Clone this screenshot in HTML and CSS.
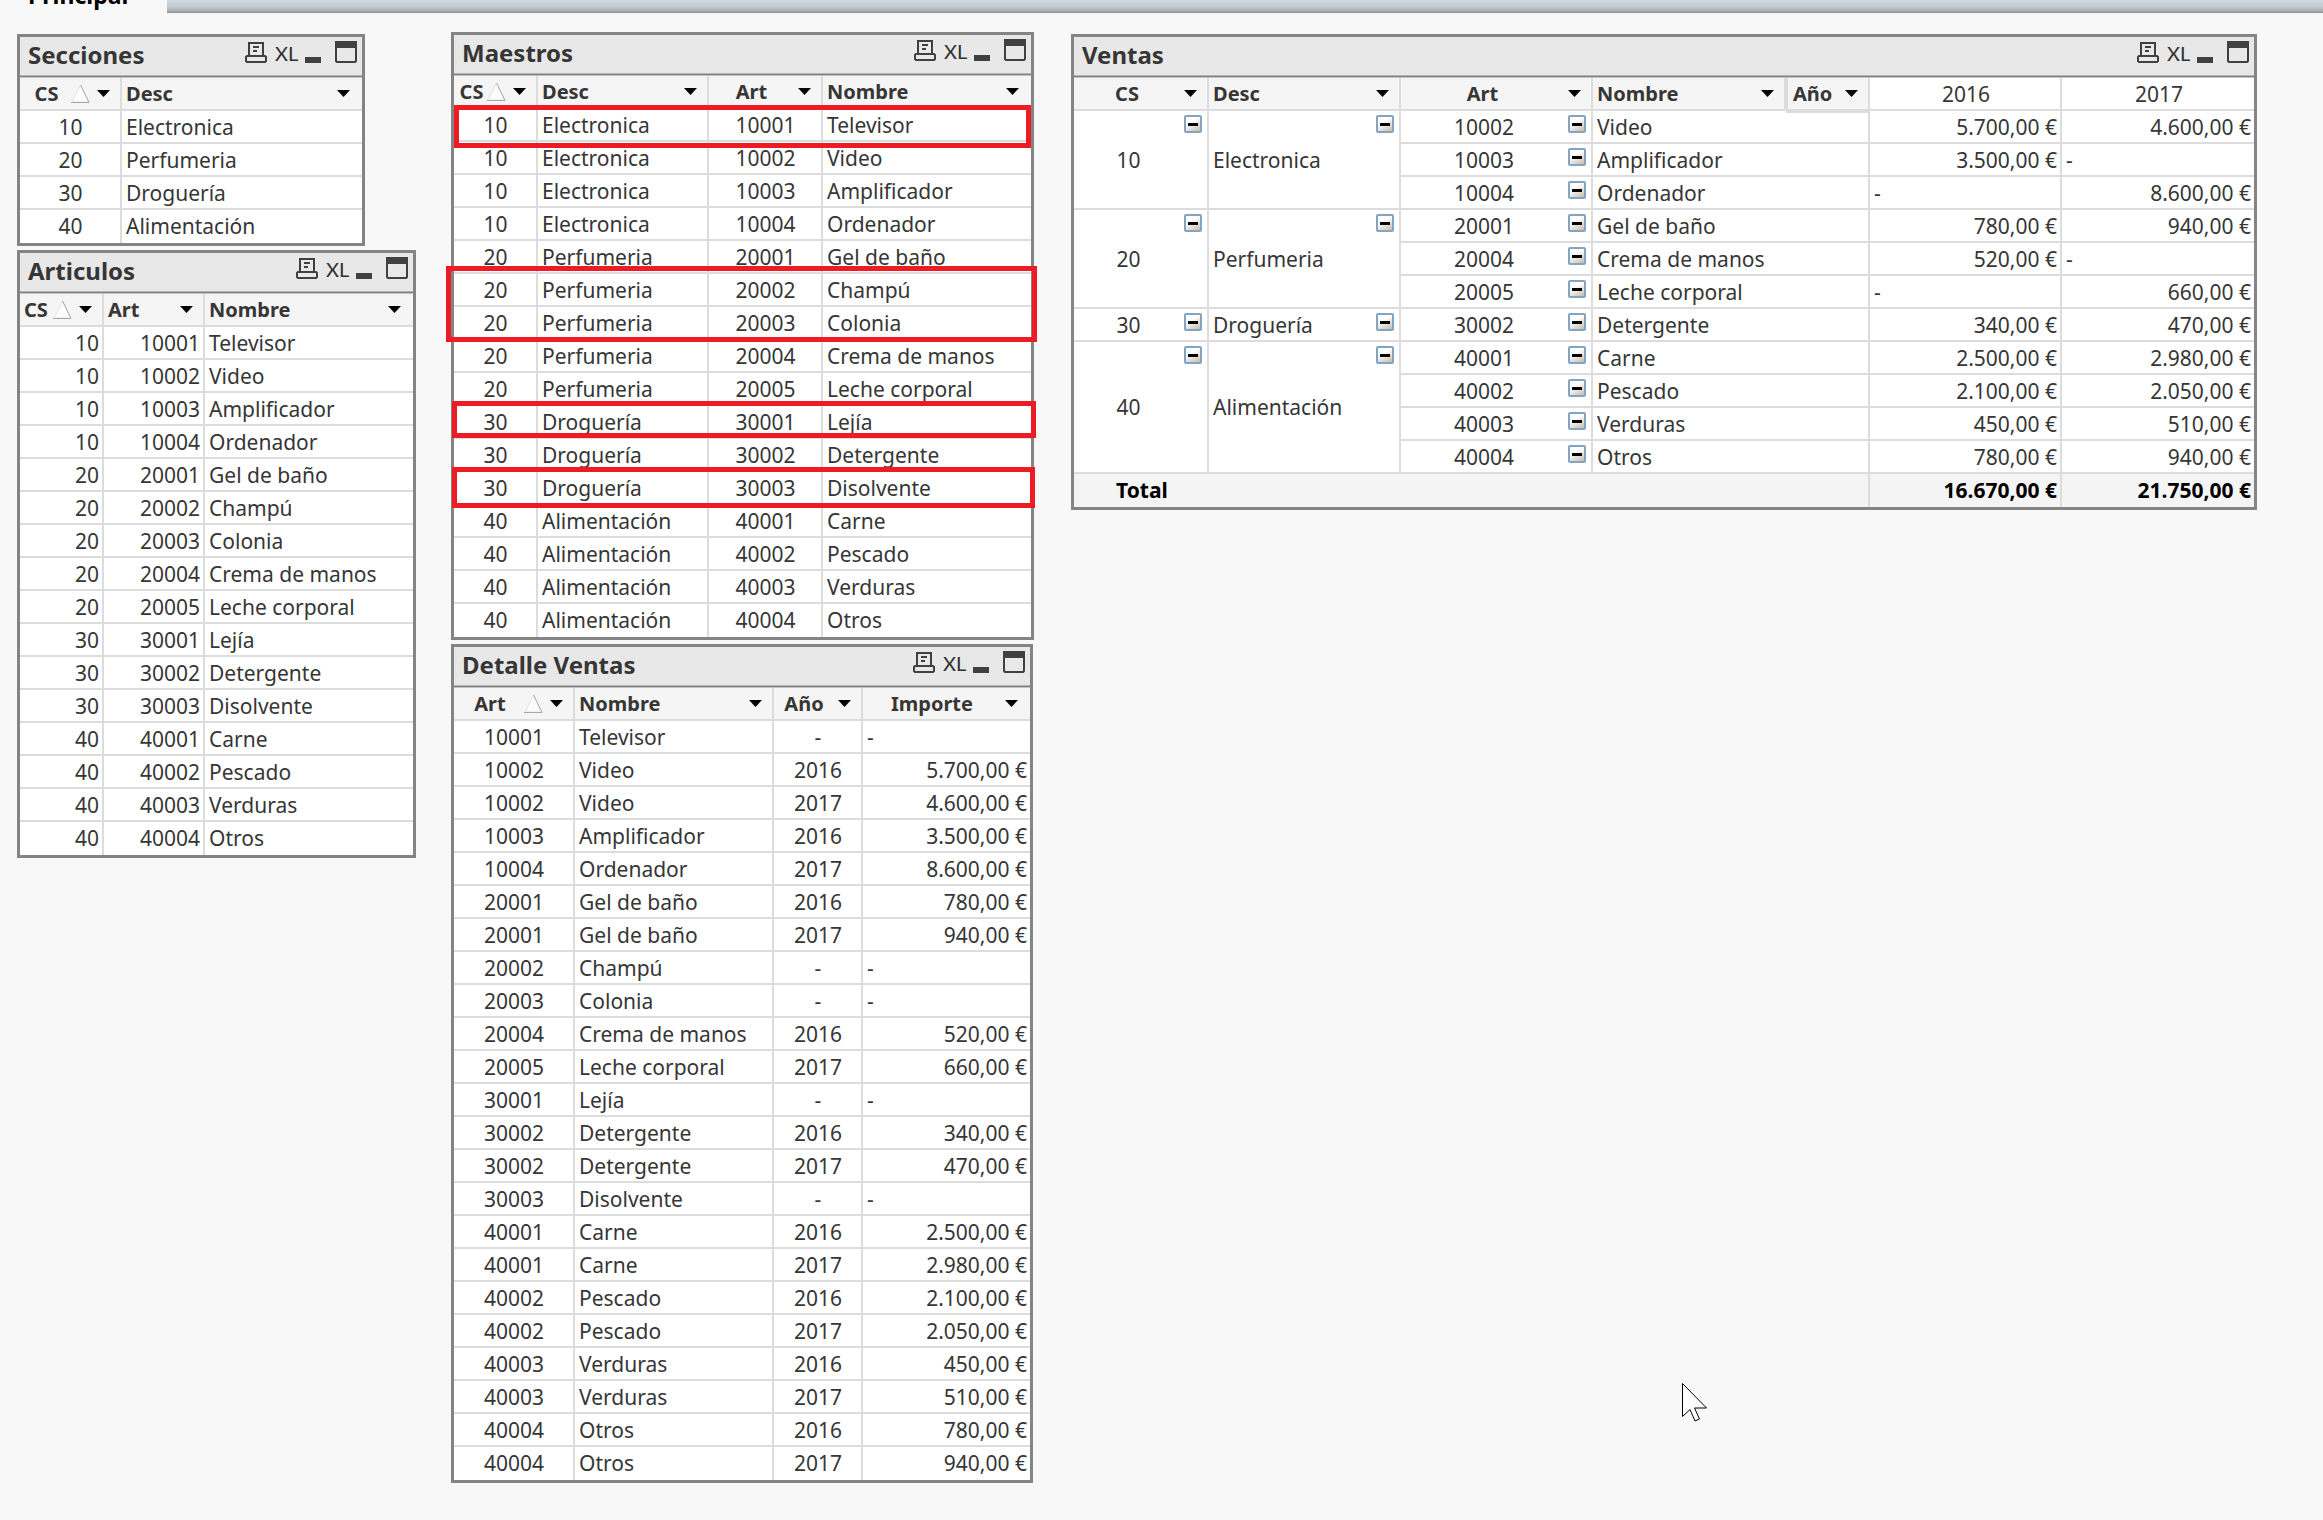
FILE: index.html
```html
<!DOCTYPE html>
<html lang="es">
<head>
<meta charset="utf-8">
<title>Principal</title>
<link rel="stylesheet" href="styles.css">
</head>
<body>
<svg class="sprite" aria-hidden="true">
  <symbol id="print" viewBox="0 0 22 22"><path d="M4 14V2h14v12M2 15h18l1 1v4l-1 1H2l-1-1v-4z" fill="none" stroke="#404040" stroke-width="2"/><path d="M8 6h6M8 10h4" stroke="#404040" stroke-width="2"/></symbol>
  <symbol id="min" viewBox="0 0 16 22"><path d="M0 16h16v6H0z" fill="#404040"/></symbol>
  <symbol id="max" viewBox="0 0 22 22"><path d="M1 1h20v19l-1 1H2l-1-1z" fill="none" stroke="#404040" stroke-width="2"/><path d="M0 0h22v7H0z" fill="#404040"/></symbol>
  <symbol id="down" viewBox="0 0 13 7"><path d="M0 0h13L6.500 7z" fill="#000"/></symbol>
  <symbol id="asc" viewBox="0 0 19 19"><path d="M1 18L9.500 1L18 18z" fill="#fcfcfc" stroke="#e4e4e4"/><path d="M9.500 1L18 18.500H0" fill="none" stroke="#a8a8a8"/></symbol>
</svg>
<header class="tabs"><a class="tab" href="#principal">Principal</a></header>
<main class="sheet" id="principal">
  <div class="column">
    <section class="panel secciones">
      <div class="caption"><h2>Secciones</h2><button aria-label="Imprimir"><svg width="22" height="22"><use href="#print"/></svg></button><button class="xl">XL</button><button aria-label="Minimizar"><svg width="16" height="22"><use href="#min"/></svg></button><button class="max" aria-label="Maximizar"><svg width="22" height="22"><use href="#max"/></svg></button></div>
      <table>
        <colgroup><col class="w102"><col></colgroup>
        <thead><tr>
          <th class="c"><div><span>CS</span><svg class="asc"><use href="#asc"/></svg><button aria-label="Filtrar CS"><svg><use href="#down"/></svg></button></div></th>
          <th><div><span>Desc</span><button aria-label="Filtrar Desc"><svg><use href="#down"/></svg></button></div></th>
        </tr></thead>
        <tbody>
          <tr><td>10</td><td>Electronica</td></tr>
          <tr><td>20</td><td>Perfumeria</td></tr>
          <tr><td>30</td><td>Droguería</td></tr>
          <tr><td>40</td><td>Alimentación</td></tr>
        </tbody>
      </table>
    </section>
    <section class="panel articulos">
      <div class="caption"><h2>Articulos</h2><button aria-label="Imprimir"><svg width="22" height="22"><use href="#print"/></svg></button><button class="xl">XL</button><button aria-label="Minimizar"><svg width="16" height="22"><use href="#min"/></svg></button><button class="max" aria-label="Maximizar"><svg width="22" height="22"><use href="#max"/></svg></button></div>
      <table>
        <colgroup><col class="w84"><col class="w101"><col></colgroup>
        <thead><tr>
          <th><div><span>CS</span><svg class="asc"><use href="#asc"/></svg><button aria-label="Filtrar CS"><svg><use href="#down"/></svg></button></div></th>
          <th><div><span>Art</span><button aria-label="Filtrar Art"><svg><use href="#down"/></svg></button></div></th>
          <th><div><span>Nombre</span><button aria-label="Filtrar Nombre"><svg><use href="#down"/></svg></button></div></th>
        </tr></thead>
        <tbody>
          <tr><td>10</td><td>10001</td><td>Televisor</td></tr>
          <tr><td>10</td><td>10002</td><td>Video</td></tr>
          <tr><td>10</td><td>10003</td><td>Amplificador</td></tr>
          <tr><td>10</td><td>10004</td><td>Ordenador</td></tr>
          <tr><td>20</td><td>20001</td><td>Gel de baño</td></tr>
          <tr><td>20</td><td>20002</td><td>Champú</td></tr>
          <tr><td>20</td><td>20003</td><td>Colonia</td></tr>
          <tr><td>20</td><td>20004</td><td>Crema de manos</td></tr>
          <tr><td>20</td><td>20005</td><td>Leche corporal</td></tr>
          <tr><td>30</td><td>30001</td><td>Lejía</td></tr>
          <tr><td>30</td><td>30002</td><td>Detergente</td></tr>
          <tr><td>30</td><td>30003</td><td>Disolvente</td></tr>
          <tr><td>40</td><td>40001</td><td>Carne</td></tr>
          <tr><td>40</td><td>40002</td><td>Pescado</td></tr>
          <tr><td>40</td><td>40003</td><td>Verduras</td></tr>
          <tr><td>40</td><td>40004</td><td>Otros</td></tr>
        </tbody>
      </table>
    </section>
  </div>
  <div class="column middle">
    <section class="panel maestros">
      <div class="caption"><h2>Maestros</h2><button aria-label="Imprimir"><svg width="22" height="22"><use href="#print"/></svg></button><button class="xl">XL</button><button aria-label="Minimizar"><svg width="16" height="22"><use href="#min"/></svg></button><button class="max" aria-label="Maximizar"><svg width="22" height="22"><use href="#max"/></svg></button></div>
      <table>
        <colgroup><col class="w84"><col class="w171"><col class="w114"><col></colgroup>
        <thead><tr>
          <th class="c"><div><span>CS</span><svg class="asc"><use href="#asc"/></svg><button aria-label="Filtrar CS"><svg><use href="#down"/></svg></button></div></th>
          <th><div><span>Desc</span><button aria-label="Filtrar Desc"><svg><use href="#down"/></svg></button></div></th>
          <th class="c"><div><span>Art</span><button aria-label="Filtrar Art"><svg><use href="#down"/></svg></button></div></th>
          <th><div><span>Nombre</span><button aria-label="Filtrar Nombre"><svg><use href="#down"/></svg></button></div></th>
        </tr></thead>
        <tbody>
          <tr><td>10</td><td>Electronica</td><td>10001</td><td>Televisor</td></tr>
          <tr><td>10</td><td>Electronica</td><td>10002</td><td>Video</td></tr>
          <tr><td>10</td><td>Electronica</td><td>10003</td><td>Amplificador</td></tr>
          <tr><td>10</td><td>Electronica</td><td>10004</td><td>Ordenador</td></tr>
          <tr><td>20</td><td>Perfumeria</td><td>20001</td><td>Gel de baño</td></tr>
          <tr><td>20</td><td>Perfumeria</td><td>20002</td><td>Champú</td></tr>
          <tr><td>20</td><td>Perfumeria</td><td>20003</td><td>Colonia</td></tr>
          <tr><td>20</td><td>Perfumeria</td><td>20004</td><td>Crema de manos</td></tr>
          <tr><td>20</td><td>Perfumeria</td><td>20005</td><td>Leche corporal</td></tr>
          <tr><td>30</td><td>Droguería</td><td>30001</td><td>Lejía</td></tr>
          <tr><td>30</td><td>Droguería</td><td>30002</td><td>Detergente</td></tr>
          <tr><td>30</td><td>Droguería</td><td>30003</td><td>Disolvente</td></tr>
          <tr><td>40</td><td>Alimentación</td><td>40001</td><td>Carne</td></tr>
          <tr><td>40</td><td>Alimentación</td><td>40002</td><td>Pescado</td></tr>
          <tr><td>40</td><td>Alimentación</td><td>40003</td><td>Verduras</td></tr>
          <tr><td>40</td><td>Alimentación</td><td>40004</td><td>Otros</td></tr>
        </tbody>
      </table>
      <div class="mark mark-televisor"></div>
      <div class="mark mark-champu"></div>
      <div class="mark mark-lejia"></div>
      <div class="mark mark-disolvente"></div>
    </section>
    <section class="panel detalle">
      <div class="caption"><h2>Detalle Ventas</h2><button aria-label="Imprimir"><svg width="22" height="22"><use href="#print"/></svg></button><button class="xl">XL</button><button aria-label="Minimizar"><svg width="16" height="22"><use href="#min"/></svg></button><button class="max" aria-label="Maximizar"><svg width="22" height="22"><use href="#max"/></svg></button></div>
      <table>
        <colgroup><col class="w121"><col class="w199"><col class="w89"><col></colgroup>
        <thead><tr>
          <th class="c"><div><span>Art</span><svg class="asc"><use href="#asc"/></svg><button aria-label="Filtrar Art"><svg><use href="#down"/></svg></button></div></th>
          <th><div><span>Nombre</span><button aria-label="Filtrar Nombre"><svg><use href="#down"/></svg></button></div></th>
          <th class="c"><div><span>Año</span><button aria-label="Filtrar Año"><svg><use href="#down"/></svg></button></div></th>
          <th class="c"><div><span>Importe</span><button aria-label="Filtrar Importe"><svg><use href="#down"/></svg></button></div></th>
        </tr></thead>
        <tbody>
          <tr><td>10001</td><td>Televisor</td><td>-</td><td class="none">-</td></tr>
          <tr><td>10002</td><td>Video</td><td>2016</td><td>5.700,00 €</td></tr>
          <tr><td>10002</td><td>Video</td><td>2017</td><td>4.600,00 €</td></tr>
          <tr><td>10003</td><td>Amplificador</td><td>2016</td><td>3.500,00 €</td></tr>
          <tr><td>10004</td><td>Ordenador</td><td>2017</td><td>8.600,00 €</td></tr>
          <tr><td>20001</td><td>Gel de baño</td><td>2016</td><td>780,00 €</td></tr>
          <tr><td>20001</td><td>Gel de baño</td><td>2017</td><td>940,00 €</td></tr>
          <tr><td>20002</td><td>Champú</td><td>-</td><td class="none">-</td></tr>
          <tr><td>20003</td><td>Colonia</td><td>-</td><td class="none">-</td></tr>
          <tr><td>20004</td><td>Crema de manos</td><td>2016</td><td>520,00 €</td></tr>
          <tr><td>20005</td><td>Leche corporal</td><td>2017</td><td>660,00 €</td></tr>
          <tr><td>30001</td><td>Lejía</td><td>-</td><td class="none">-</td></tr>
          <tr><td>30002</td><td>Detergente</td><td>2016</td><td>340,00 €</td></tr>
          <tr><td>30002</td><td>Detergente</td><td>2017</td><td>470,00 €</td></tr>
          <tr><td>30003</td><td>Disolvente</td><td>-</td><td class="none">-</td></tr>
          <tr><td>40001</td><td>Carne</td><td>2016</td><td>2.500,00 €</td></tr>
          <tr><td>40001</td><td>Carne</td><td>2017</td><td>2.980,00 €</td></tr>
          <tr><td>40002</td><td>Pescado</td><td>2016</td><td>2.100,00 €</td></tr>
          <tr><td>40002</td><td>Pescado</td><td>2017</td><td>2.050,00 €</td></tr>
          <tr><td>40003</td><td>Verduras</td><td>2016</td><td>450,00 €</td></tr>
          <tr><td>40003</td><td>Verduras</td><td>2017</td><td>510,00 €</td></tr>
          <tr><td>40004</td><td>Otros</td><td>2016</td><td>780,00 €</td></tr>
          <tr><td>40004</td><td>Otros</td><td>2017</td><td>940,00 €</td></tr>
        </tbody>
      </table>
    </section>
  </div>
  <div class="column">
    <section class="panel ventas">
      <div class="caption"><h2>Ventas</h2><button aria-label="Imprimir"><svg width="22" height="22"><use href="#print"/></svg></button><button class="xl">XL</button><button aria-label="Minimizar"><svg width="16" height="22"><use href="#min"/></svg></button><button class="max" aria-label="Maximizar"><svg width="22" height="22"><use href="#max"/></svg></button></div>
      <table>
        <colgroup><col class="w135"><col class="w192"><col class="w192"><col class="w193"><col class="w84"><col class="w192"><col></colgroup>
        <thead><tr>
          <th class="c"><div><span>CS</span><button aria-label="Filtrar CS"><svg><use href="#down"/></svg></button></div></th>
          <th><div><span>Desc</span><button aria-label="Filtrar Desc"><svg><use href="#down"/></svg></button></div></th>
          <th class="c"><div><span>Art</span><button aria-label="Filtrar Art"><svg><use href="#down"/></svg></button></div></th>
          <th><div><span>Nombre</span><button aria-label="Filtrar Nombre"><svg><use href="#down"/></svg></button></div></th>
          <th class="pivot"><div><span>Año</span><button aria-label="Filtrar Año"><svg><use href="#down"/></svg></button></div></th>
          <th class="year">2016</th>
          <th class="year">2017</th>
        </tr></thead>
        <tbody>
          <tr><td class="key" rowspan="3">10<button class="fold" aria-label="Contraer"></button></td><td class="group" rowspan="3">Electronica<button class="fold" aria-label="Contraer"></button></td><td class="key">10002<button class="fold" aria-label="Contraer"></button></td><td colspan="2">Video</td><td class="r">5.700,00 €</td><td class="r">4.600,00 €</td></tr>
          <tr><td class="key">10003<button class="fold" aria-label="Contraer"></button></td><td colspan="2">Amplificador</td><td class="r">3.500,00 €</td><td>-</td></tr>
          <tr><td class="key">10004<button class="fold" aria-label="Contraer"></button></td><td colspan="2">Ordenador</td><td>-</td><td class="r">8.600,00 €</td></tr>
          <tr><td class="key" rowspan="3">20<button class="fold" aria-label="Contraer"></button></td><td class="group" rowspan="3">Perfumeria<button class="fold" aria-label="Contraer"></button></td><td class="key">20001<button class="fold" aria-label="Contraer"></button></td><td colspan="2">Gel de baño</td><td class="r">780,00 €</td><td class="r">940,00 €</td></tr>
          <tr><td class="key">20004<button class="fold" aria-label="Contraer"></button></td><td colspan="2">Crema de manos</td><td class="r">520,00 €</td><td>-</td></tr>
          <tr><td class="key">20005<button class="fold" aria-label="Contraer"></button></td><td colspan="2">Leche corporal</td><td>-</td><td class="r">660,00 €</td></tr>
          <tr><td class="key">30<button class="fold" aria-label="Contraer"></button></td><td class="group">Droguería<button class="fold" aria-label="Contraer"></button></td><td class="key">30002<button class="fold" aria-label="Contraer"></button></td><td colspan="2">Detergente</td><td class="r">340,00 €</td><td class="r">470,00 €</td></tr>
          <tr><td class="key" rowspan="4">40<button class="fold" aria-label="Contraer"></button></td><td class="group" rowspan="4">Alimentación<button class="fold" aria-label="Contraer"></button></td><td class="key">40001<button class="fold" aria-label="Contraer"></button></td><td colspan="2">Carne</td><td class="r">2.500,00 €</td><td class="r">2.980,00 €</td></tr>
          <tr><td class="key">40002<button class="fold" aria-label="Contraer"></button></td><td colspan="2">Pescado</td><td class="r">2.100,00 €</td><td class="r">2.050,00 €</td></tr>
          <tr><td class="key">40003<button class="fold" aria-label="Contraer"></button></td><td colspan="2">Verduras</td><td class="r">450,00 €</td><td class="r">510,00 €</td></tr>
          <tr><td class="key">40004<button class="fold" aria-label="Contraer"></button></td><td colspan="2">Otros</td><td class="r">780,00 €</td><td class="r">940,00 €</td></tr>
        </tbody>
        <tfoot><tr><td class="total" colspan="5">Total</td><td class="r">16.670,00 €</td><td class="r">21.750,00 €</td></tr></tfoot>
      </table>
    </section>
  </div>
</main>
<svg class="pointer" width="26" height="40" viewBox="0 0 26 40" aria-hidden="true"><path d="M.5 .5V33.500L8 26.500L13 38L17.500 36L12.500 25H24.500z" fill="#fff" stroke="#000"/></svg>
</body>
</html>
```
FILE: styles.css
```css
* { box-sizing: border-box; }

body {
  margin: 0;
  background: #f8f8f8;
  color: #363636;
  font-family: "Noto Sans", sans-serif;
  font-size: 21px;
  line-height: 30px;
}

.sprite { display: none; }

button {
  margin: 0;
  padding: 0;
  border: 0;
  background: none;
  color: inherit;
  font: inherit;
}

button svg { display: block; }

/* Sheet tabs */
.tabs {
  display: flex;
  align-items: flex-end;
  height: 13px;
  overflow: hidden;
  background: linear-gradient(#d0dae4, #c4ccd2 50%, #a4a8ac 90%, #84888c);
}

.tab {
  width: 167px;
  padding: 0 0 2px 28px;
  background: #f8f8f8;
  color: #000;
  font-size: 23px;
  font-weight: 700;
  line-height: 31px;
  text-decoration: none;
}

.sheet {
  display: grid;
  grid-template-columns: 399fr 585fr 1186fr;
  align-items: start;
  column-gap: 35px;
  padding: 19px 66px 37px 17px;
}

.column {
  display: flex;
  flex-direction: column;
  gap: 4px;
  padding-top: 2px;
}

.middle {
  padding-top: 0;
  padding-right: 2px;
}

/* Object windows */
.panel {
  position: relative;
  border: 3px solid #848484;
  background: #fff;
}

.secciones { width: 348px; }
.detalle { margin-right: 1px; }

.caption {
  display: flex;
  align-items: flex-start;
  gap: 8px;
  height: 41px;
  padding: 4px 5px 0 8px;
  background: #e8e8e8;
  box-shadow: inset 0 -1px #c4c4c4, inset 0 -2px #808080, inset 0 -3px #b4b4b4;
}

.caption h2 {
  flex: 1;
  margin: 0;
  font-size: 24px;
  font-weight: 700;
  line-height: 28px;
}

.caption .max { margin-left: 6px; }

.caption .xl {
  width: 22px;
  color: #303030;
  font-family: Lato, sans-serif;
  font-size: 20px;
  font-weight: 400;
  line-height: 24px;
  white-space: nowrap;
}

/* Tables */
table {
  width: 100%;
  table-layout: fixed;
  border-collapse: separate;
  border-spacing: 0;
}

.w84 { width: 84px; }
.w89 { width: 89px; }
.w101 { width: 101px; }
.w102 { width: 102px; }
.w114 { width: 114px; }
.w121 { width: 121px; }
.w135 { width: 135px; }
.w171 { width: 171px; }
.w192 { width: 192px; }
.w193 { width: 193px; }
.w199 { width: 199px; }

th, td {
  height: 33px;
  padding: 0 3px 0 4px;
  border: 0 solid #dcdcdc;
  border-width: 0 2px 2px 0;
  text-align: left;
  white-space: nowrap;
}

th:last-child, td:last-child { border-right-width: 0; }

table > :last-child > tr:last-child > td {
  padding-bottom: 2px;
  border-bottom-width: 0;
}

th {
  padding: 0 10px 0 0;
  background: #f5f5f5;
  font-size: 20px;
}

th:last-child { padding-right: 12px; }

th div {
  display: flex;
  align-items: center;
}

th span {
  flex: 1;
  padding-left: 4px;
}

th.c span { padding-left: 2px; text-align: center; }

th button {
  width: 19px;
  padding-left: 6px;
}

th button svg { width: 13px; height: 7px; }

.asc {
  width: 19px;
  height: 19px;
  margin-right: 1px;
}

.secciones td:first-child,
.maestros td:first-child,
.maestros td:nth-child(3),
.detalle td:first-child,
.detalle td:nth-child(3) { text-align: center; }

.articulos td:first-child,
.articulos td:nth-child(2),
.detalle td:nth-child(4),
td.r { text-align: right; }

.detalle td.none { text-align: left; }

/* Pivot table */
.key, .group { position: relative; }

.key {
  padding-right: 28px;
  text-align: center;
}

.fold {
  position: absolute;
  top: 4px;
  right: 5px;
  width: 18px;
  height: 18px;
  border: 2px solid #84a4c4;
  border-radius: 2px;
  background:
    linear-gradient(#000, #000) center / 10px 3px no-repeat,
    linear-gradient(150deg, #fff 35%, #c4bcac);
}

th.pivot {
  border-left-width: 2px;
  box-shadow: 0 2px #dcdcdc;
}

th.pivot span { padding-left: 5px; }

th.year {
  padding: 0 0 0 2px;
  background: #fff;
  font-size: 21px;
  font-weight: 400;
  text-align: center;
}

tfoot td {
  background: #f4f4f4;
  color: #000;
  font-weight: 700;
}

td.total { padding-left: 42px; }

/* Highlight frames */
.mark {
  position: absolute;
  border: 5px solid #ed1c24;
}

.mark-televisor { top: 70px; right: 0; left: 0; height: 43px; }
.mark-champu { top: 231px; right: -6px; left: -8px; height: 76px; }
.mark-lejia { top: 366px; right: -5px; left: -2px; height: 37px; }
.mark-disolvente { top: 432px; right: -4px; left: -2px; height: 41px; }

.pointer {
  position: absolute;
  top: 1383px;
  left: 1682px;
}
```
